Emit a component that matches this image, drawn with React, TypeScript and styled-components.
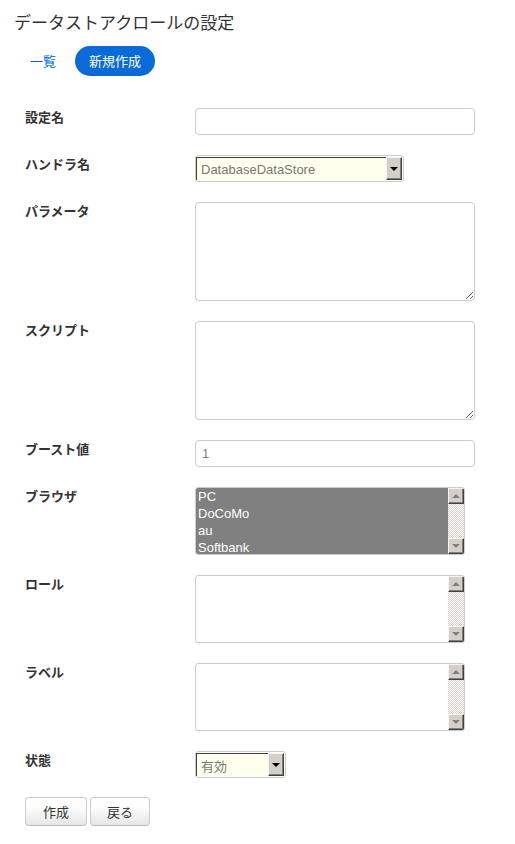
import React, { useState } from "react";
import styled, { createGlobalStyle } from "styled-components";

const GlobalStyle = createGlobalStyle`
  body {
    margin: 0;
    background: #fff;
    font-family: "Liberation Sans", "Noto Sans CJK JP", sans-serif;
    color: #333;
  }
`;

type SelectProps = { value: string; width: number };

function ClassicSelect({ value, width }: SelectProps) {
    return (
        <SelectBox $width={width}>
            <SelectValue>{value}</SelectValue>
            <SelectButton>
                <Arrow $dir="down" $color="#000" />
            </SelectButton>
        </SelectBox>
    );
}

function ListBox({ items, selected }: { items: string[]; selected?: boolean }) {
    return (
        <ListFrame>
            <ListItems>
                {items.map((item) => (
                    <ListItem key={item} $selected={selected}>
                        {item}
                    </ListItem>
                ))}
            </ListItems>
            <ScrollBar>
                <ScrollButton>
                    <Arrow $dir="up" $color="#808080" />
                </ScrollButton>
                <ScrollTrack />
                <ScrollButton>
                    <Arrow $dir="down" $color="#808080" />
                </ScrollButton>
            </ScrollBar>
        </ListFrame>
    );
}

export default function App() {
    const [name, setName] = useState("");
    const [param, setParam] = useState("");
    const [script, setScript] = useState("");
    const [boost, setBoost] = useState("1");

    return (
        <Page>
            <GlobalStyle />
            <Title>データストアクロールの設定</Title>

            <Nav>
                <NavLink>一覧</NavLink>
                <NavPill>新規作成</NavPill>
            </Nav>

            <Form>
                <Row>
                    <Label>設定名</Label>
                    <TextInput value={name} onChange={(e) => setName(e.target.value)} />
                </Row>
                <Row>
                    <Label>ハンドラ名</Label>
                    <ClassicSelect value="DatabaseDataStore" width={209} />
                </Row>
                <Row>
                    <Label>パラメータ</Label>
                    <TextArea value={param} onChange={(e) => setParam(e.target.value)} />
                </Row>
                <Row>
                    <Label>スクリプト</Label>
                    <TextArea value={script} onChange={(e) => setScript(e.target.value)} />
                </Row>
                <Row>
                    <Label>ブースト値</Label>
                    <TextInput value={boost} onChange={(e) => setBoost(e.target.value)} />
                </Row>
                <Row>
                    <Label>ブラウザ</Label>
                    <ListBox items={["PC", "DoCoMo", "au", "Softbank"]} selected />
                </Row>
                <Row>
                    <Label>ロール</Label>
                    <ListBox items={[]} />
                </Row>
                <Row>
                    <Label>ラベル</Label>
                    <ListBox items={[]} />
                </Row>
                <Row>
                    <Label>状態</Label>
                    <ClassicSelect value="有効" width={91} />
                </Row>

                <Actions>
                    <Button $width={62}>作成</Button>
                    <Button $width={60}>戻る</Button>
                </Actions>
            </Form>
        </Page>
    );
}

const Page = styled.div`
    padding: 11px 14px 20px;
`;

const Title = styled.h2`
    margin: 0;
    font-size: 17px;
    font-weight: normal;
    line-height: 22px;
    color: #333;
    font-family: "Noto Sans CJK JP", sans-serif;
`;

const Nav = styled.div`
    display: flex;
    align-items: center;
    gap: 4px;
    margin-top: 13px;
`;

const NavLink = styled.a`
    padding: 0 15px 0 16px;
    font-size: 13px;
    line-height: 30px;
    color: #0069d6;
    font-family: "Noto Sans CJK JP", sans-serif;
    cursor: pointer;
`;

const NavPill = styled.a`
    padding: 0 14px;
    height: 30px;
    line-height: 30px;
    font-size: 13px;
    color: #fff;
    background: #0a6ad6;
    border-radius: 15px;
    font-family: "Noto Sans CJK JP", sans-serif;
`;

const Form = styled.div`
    margin-top: 32px;
    padding-left: 11px;
`;

const Row = styled.div`
    display: grid;
    grid-template-columns: 170px 1fr;
    align-items: start;
    margin-bottom: 20px;
`;

const Label = styled.div`
    padding-top: 0;
    font-size: 13px;
    font-weight: bold;
    line-height: 18px;
    color: #333;
    font-family: "Noto Sans CJK JP", sans-serif;
`;

const TextInput = styled.input`
    box-sizing: border-box;
    display: block;
    width: 280px;
    height: 27px;
    margin: 0;
    padding: 0 6px;
    border: 1px solid #ccc;
    border-radius: 4px;
    font-size: 13px;
    color: #808080;
    font-family: "Liberation Sans", sans-serif;
    outline: none;
`;

const TextArea = styled.textarea`
    box-sizing: border-box;
    display: block;
    width: 280px;
    height: 99px;
    margin: 0;
    padding: 4px 6px;
    border: 1px solid #ccc;
    border-radius: 4px;
    font-size: 13px;
    outline: none;
`;

const SelectBox = styled.div<{ $width: number }>`
    box-sizing: border-box;
    display: flex;
    width: ${(p) => p.$width}px;
    height: 27px;
    border: 1px solid #ccc;
    border-radius: 3px;
    padding: 1px 1px 1px 0;
    background: #fff;
`;

const SelectValue = styled.div`
    flex: 1;
    display: flex;
    align-items: center;
    padding-left: 4px;
    background: #ffffee;
    border-top: 1px solid #404040;
    border-left: 1px solid #404040;
    font-size: 13px;
    color: #777;
    font-family: "Liberation Sans", "Noto Sans CJK JP", sans-serif;
`;

const SelectButton = styled.div`
    box-sizing: border-box;
    width: 16px;
    display: flex;
    align-items: center;
    justify-content: center;
    background: #d4d0c8;
    border-top: 1px solid #f4f4f4;
    border-left: 1px solid #f4f4f4;
    border-right: 1px solid #404040;
    border-bottom: 1px solid #404040;
    box-shadow: inset -1px -1px 0 #808080;
`;

const Arrow = styled.span<{ $dir: "up" | "down"; $color: string }>`
    width: 0;
    height: 0;
    border-left: 4px solid transparent;
    border-right: 4px solid transparent;
    ${(p) =>
        p.$dir === "down"
            ? `border-top: 4px solid ${p.$color};`
            : `border-bottom: 4px solid ${p.$color};`}
`;

const ListFrame = styled.div`
    box-sizing: border-box;
    display: flex;
    width: 270px;
    height: 68px;
    border: 1px solid #ccc;
    border-radius: 3px;
    overflow: hidden;
    background: #fff;
`;

const ListItems = styled.div`
    flex: 1;
    padding-top: 0;
`;

const ListItem = styled.div<{ $selected?: boolean }>`
    height: 17px;
    line-height: 17px;
    padding-left: 2px;
    font-size: 13px;
    color: ${(p) => (p.$selected ? "#fff" : "#333")};
    background: ${(p) => (p.$selected ? "#808080" : "transparent")};
    font-family: "Liberation Sans", sans-serif;
`;

const ScrollBar = styled.div`
    width: 16px;
    display: flex;
    flex-direction: column;
    background: #fff;
`;

const ScrollButton = styled.div`
    box-sizing: border-box;
    height: 16px;
    display: flex;
    align-items: center;
    justify-content: center;
    background: #d4d0c8;
    border-top: 1px solid #f4f4f4;
    border-left: 1px solid #f4f4f4;
    border-right: 1px solid #404040;
    border-bottom: 1px solid #404040;
    box-shadow: inset -1px -1px 0 #808080;
`;

const ScrollTrack = styled.div`
    flex: 1;
    background: repeating-conic-gradient(#d4d0c8 0 25%, #fff 0 50%) 0 0 / 2px 2px;
`;

const Actions = styled.div`
    display: flex;
    gap: 3px;
    margin-top: -1px;
`;

const Button = styled.button<{ $width: number }>`
    box-sizing: border-box;
    width: ${(p) => p.$width}px;
    height: 29px;
    padding: 0;
    border: 1px solid #ccc;
    border-bottom-color: #bbb;
    border-radius: 4px;
    background: linear-gradient(#fff 0%, #fff 30%, #e6e6e6 100%);
    font-size: 13px;
    color: #333;
    font-family: "Noto Sans CJK JP", sans-serif;
    cursor: pointer;
`;
